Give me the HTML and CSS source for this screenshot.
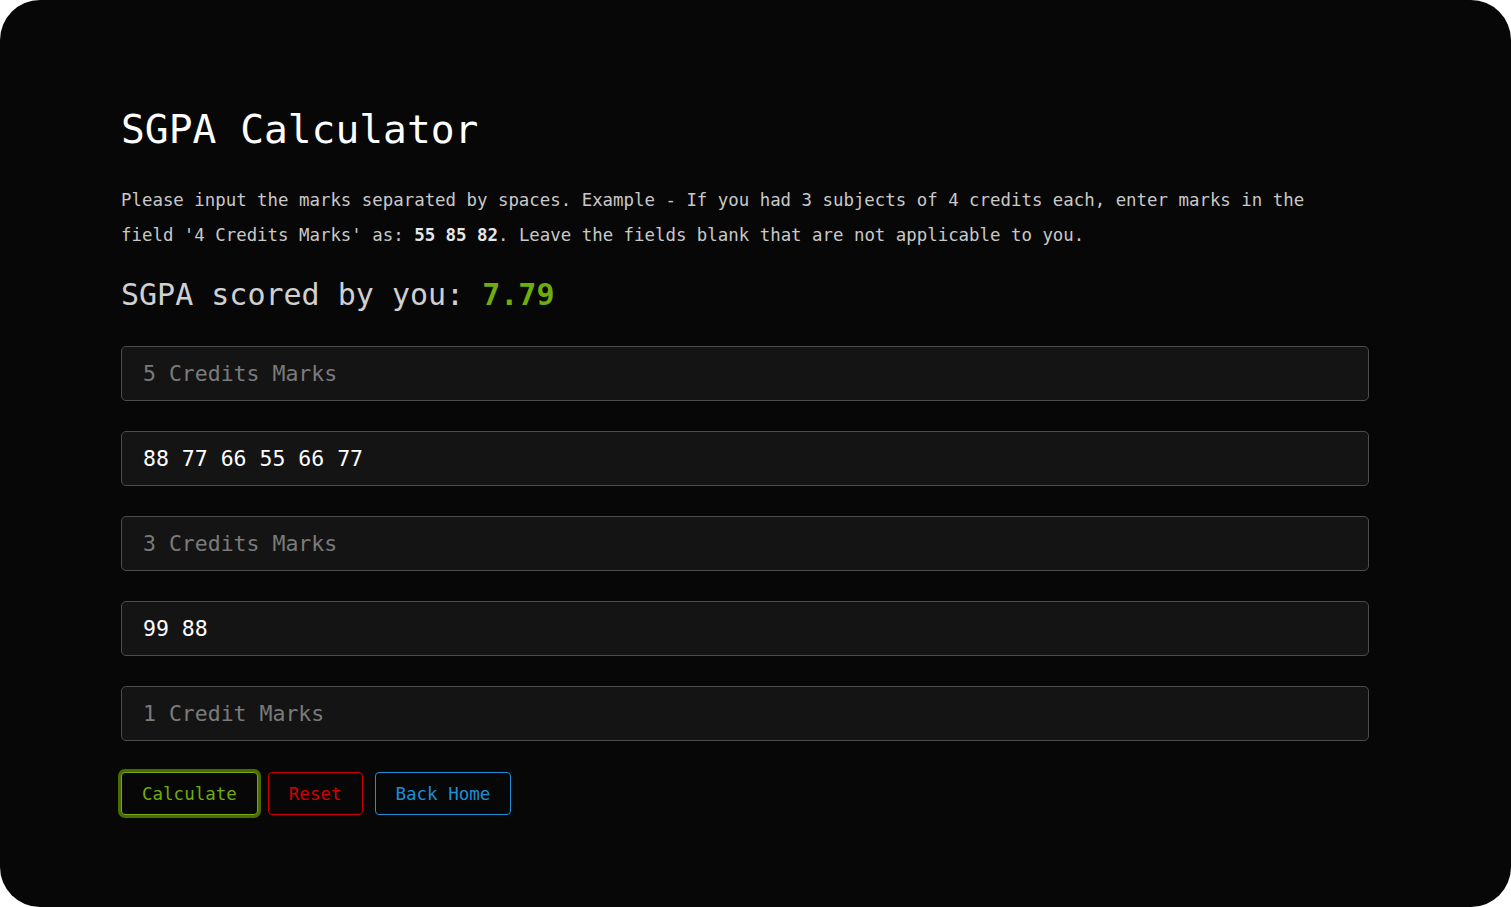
FILE: index.html
```html
<!DOCTYPE html>
<html lang="en">
<head>
<meta charset="utf-8">
<title>SGPA Calculator</title>
<link rel="stylesheet" href="styles.css">
</head>
<body>
<main class="card">
  <h1 class="title">SGPA Calculator</h1>
  <p class="intro">Please input the marks separated by spaces. Example - If you had 3 subjects of 4 credits each, enter marks in the field '4 Credits Marks' as: <b>55 85 82</b>. Leave the fields blank that are not applicable to you.</p>
  <h2 class="result">SGPA scored by you: <span class="score">7.79</span></h2>
  <form class="form">
    <input class="field" type="text" placeholder="5 Credits Marks">
    <input class="field" type="text" value="88 77 66 55 66 77" placeholder="4 Credits Marks">
    <input class="field" type="text" placeholder="3 Credits Marks">
    <input class="field" type="text" value="99 88" placeholder="2 Credits Marks">
    <input class="field" type="text" placeholder="1 Credit Marks">
    <div class="actions">
      <button type="button" class="btn btn-green btn-focus">Calculate</button>
      <button type="button" class="btn btn-red">Reset</button>
      <button type="button" class="btn btn-blue">Back Home</button>
    </div>
  </form>
</main>
</body>
</html>
```

FILE: styles.css
```css
html, body {
  margin: 0;
  padding: 0;
  background: #ffffff;
}

body {
  font-family: "DejaVu Sans Mono", "Liberation Mono", monospace;
}

.card {
  box-sizing: border-box;
  width: 1511px;
  height: 907px;
  background: #070707;
  border-radius: 40px;
  padding: 99px 142px 0 121px;
  overflow: hidden;
}

.title {
  margin: 0;
  font-size: 39.6px;
  line-height: 60px;
  font-weight: 400;
  color: #ffffff;
}

.intro {
  max-width: 1200px;
  margin: 24px 0 0 0;
  font-size: 17.4px;
  line-height: 35px;
  color: #c9c9c9;
}

.intro b {
  color: #e6e6e6;
  font-weight: 700;
}

.result {
  margin: 20px 0 0 0;
  font-size: 30px;
  line-height: 44px;
  font-weight: 400;
  color: #d0d0d0;
}

.score {
  color: #6fac0c;
  font-weight: 700;
}

.form {
  margin: 29px 0 0 0;
  display: flex;
  flex-direction: column;
}

.field {
  box-sizing: border-box;
  width: 100%;
  height: 55px;
  margin: 0 0 30px 0;
  padding: 0 21px;
  background: #141414;
  border: 1px solid #4d4d4d;
  border-radius: 5px;
  font-family: "DejaVu Sans Mono", "Liberation Mono", monospace;
  font-size: 21.5px;
  color: #ffffff;
  outline: none;
}

.field::placeholder {
  color: #7b7b7b;
}

.actions {
  display: flex;
  gap: 10px;
  padding-top: 1px;
}

.btn {
  box-sizing: border-box;
  height: 43px;
  padding: 0 20px;
  background: #070707;
  border: 1px solid;
  border-radius: 4px;
  font-family: "DejaVu Sans Mono", "Liberation Mono", monospace;
  font-size: 17.5px;
  cursor: pointer;
}

.btn-green {
  color: #6fac0c;
  border-color: #7aaa10;
}

.btn-focus {
  box-shadow: 0 0 0 3px #4a6b00;
}

.btn-red {
  color: #d40000;
  border-color: #cc0000;
}

.btn-blue {
  color: #1f8ed6;
  border-color: #1f8ed6;
  margin-left: 2px;
}
```
